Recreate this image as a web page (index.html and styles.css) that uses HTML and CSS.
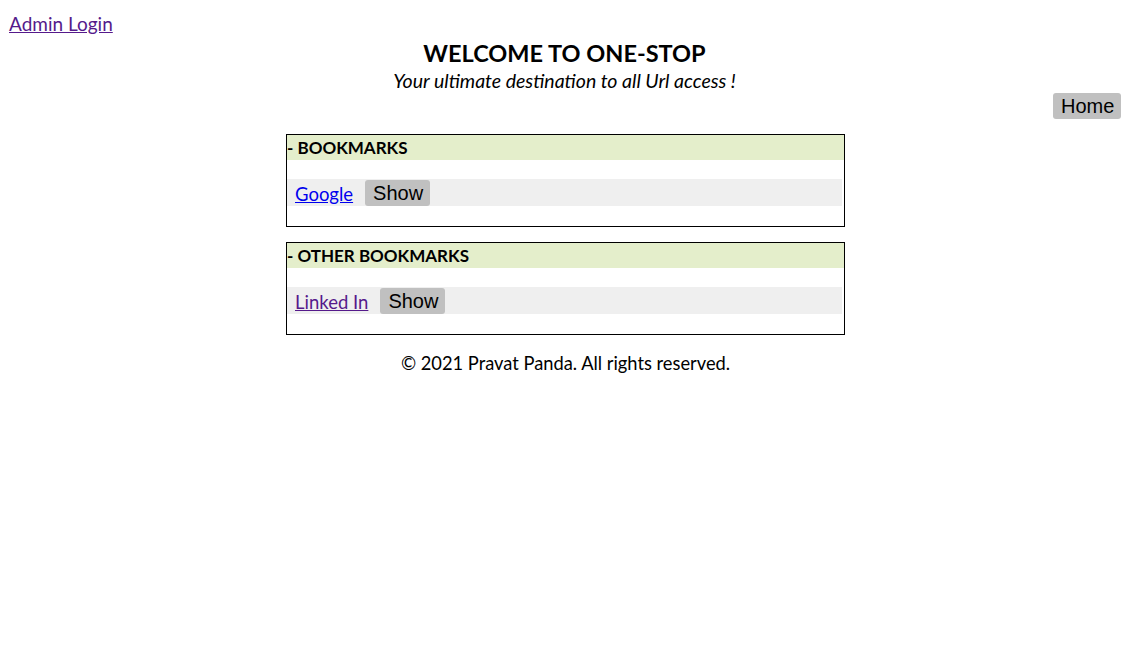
FILE: index.html
```html
<!DOCTYPE html>
<html>
<head>
<meta charset="utf-8">
<link rel="stylesheet" href="styles.css">
</head>
<body>
<div class="topbar"><a class="admin" href="#">Admin Login</a></div>
<header class="hero">
  <h1 class="title">WELCOME TO ONE-STOP</h1>
  <p class="subtitle">Your ultimate destination to all Url access !</p>
</header>
<div class="homerow"><button class="btn home">Home</button></div>
<main class="content">
  <section class="box">
    <div class="box-head">- BOOKMARKS</div>
    <div class="box-row"><a class="link" href="#">Google</a><button class="btn show">Show</button></div>
  </section>
  <section class="box">
    <div class="box-head">- OTHER BOOKMARKS</div>
    <div class="box-row"><a class="link visited" href="#">Linked In</a><button class="btn show">Show</button></div>
  </section>
  <footer class="footer">© 2021 Pravat Panda. All rights reserved.</footer>
</main>
</body>
</html>
```
FILE: styles.css
```css
html, body { margin: 0; padding: 0; background: #fff; }
body {
  padding: 8px;
  font-family: "Lato", "Liberation Sans", sans-serif;
  color: #000;
}
.topbar { height: 30px; padding-left: 1px; }
.admin {
  font-family: "Lato", sans-serif;
  font-size: 19px;
  color: #551a8b;
  line-height: 31px;
}
.hero { text-align: center; }
.title {
  margin: 0;
  font-size: 23.5px;
  font-weight: bold;
  line-height: 30px;
}
.subtitle {
  margin: 0;
  font-style: italic;
  font-size: 19.5px;
  line-height: 25px;
}
.homerow { display: flex; justify-content: flex-end; }
.btn {
  font-family: "Liberation Sans", Arial, sans-serif;
  font-size: 20px;
  background: #c0c0c0;
  border: none;
  border-radius: 3px;
  color: #000;
  height: 26px;
  padding: 0 8px;
  line-height: 27px;
}
.home { width: 68px; }
.content {
  width: 559px;
  margin: 15px 0 0 calc(50% - 278.5px);
}
.box {
  border: 1px solid #000;
  margin-bottom: 15px;
  height: 91px;
}
.box-head {
  background: #e4eecb;
  font-weight: bold;
  font-size: 17px;
  line-height: 26px;
  height: 25px;
}
.box-row {
  margin-top: 19px;
  margin-right: 2px;
  background: #efefef;
  height: 27px;
  display: flex;
  align-items: center;
  padding-left: 8px;
}
.link {
  font-size: 18.5px;
  color: #0000ee;
  margin-right: 12px;
  margin-top: 3px;
}
.link.visited { color: #551a8b; }
.show { width: 65px; }
.footer {
  text-align: center;
  font-size: 18.3px;
  margin-top: 2px;
  line-height: 26px;
}
```
